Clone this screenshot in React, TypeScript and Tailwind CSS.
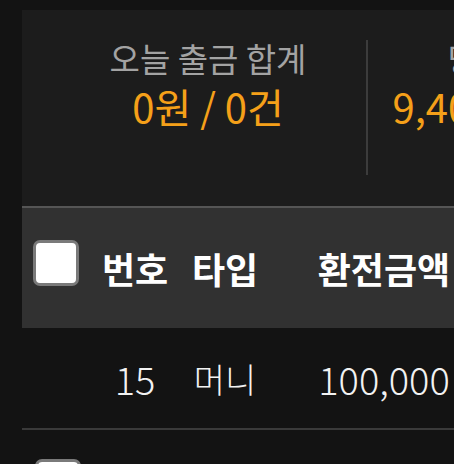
import React from "react";

const font = { fontFamily: '"Noto Sans CJK KR", "Noto Sans", sans-serif' };

function Stat({ label, value, width }: { label: string; value: string; width: string }) {
  return (
    <div className={`${width} shrink-0 flex flex-col items-center pt-[24px]`}>
      <div className="text-[33px] leading-[48px] text-[#a3a3a3] whitespace-nowrap">{label}</div>
      <div className="text-[40px] leading-[48px] text-[#f5a019] whitespace-nowrap">{value}</div>
    </div>
  );
}

function Checkbox() {
  return <div className="w-[46px] h-[46px] rounded-[7px] bg-white border-[3px] border-[#7a7a7a]" />;
}

export default function App() {
  return (
    <div style={font} className="w-[454px] h-[464px] overflow-hidden bg-[#131313] pt-[10px] pl-[22px]">
      <div className="w-[700px] bg-[#1c1c1c]">
        <div className="flex h-[196px] pl-[28px]">
          <Stat label="오늘 출금 합계" value="0원 / 0건" width="w-[316px]" />
          <div className="w-[2px] h-[135px] mt-[30px] bg-[#3c3c3c] shrink-0" />
          <Stat label="당월 출금 합계" value="9,400,000원 / 9건" width="w-[356px]" />
        </div>
      </div>
      <div className="w-[700px] border-t-[2px] border-[#555]">
        <div className="flex items-center h-[120px] bg-[#313131] text-white font-semibold text-[36px]">
          <div className="w-[68px] shrink-0 pl-[11px] mb-[10px]">
            <Checkbox />
          </div>
          <div className="w-[90px] text-center whitespace-nowrap">번호</div>
          <div className="w-[90px] text-center whitespace-nowrap">타입</div>
          <div className="w-[228px] text-center whitespace-nowrap">환전금액</div>
        </div>
        <div className="flex items-center h-[102px] border-b-[2px] border-[#3a3a3a] text-[#f2f2f2] font-light">
          <div className="w-[68px] shrink-0" />
          <div className="w-[90px] text-center text-[38px]">15</div>
          <div className="w-[90px] text-center text-[34px]">머니</div>
          <div className="w-[228px] text-center text-[38px]">100,000</div>
        </div>
        <div className="flex items-start h-[80px] pt-[29px]">
          <div className="w-[68px] shrink-0 pl-[13px]">
            <Checkbox />
          </div>
        </div>
      </div>
    </div>
  );
}
